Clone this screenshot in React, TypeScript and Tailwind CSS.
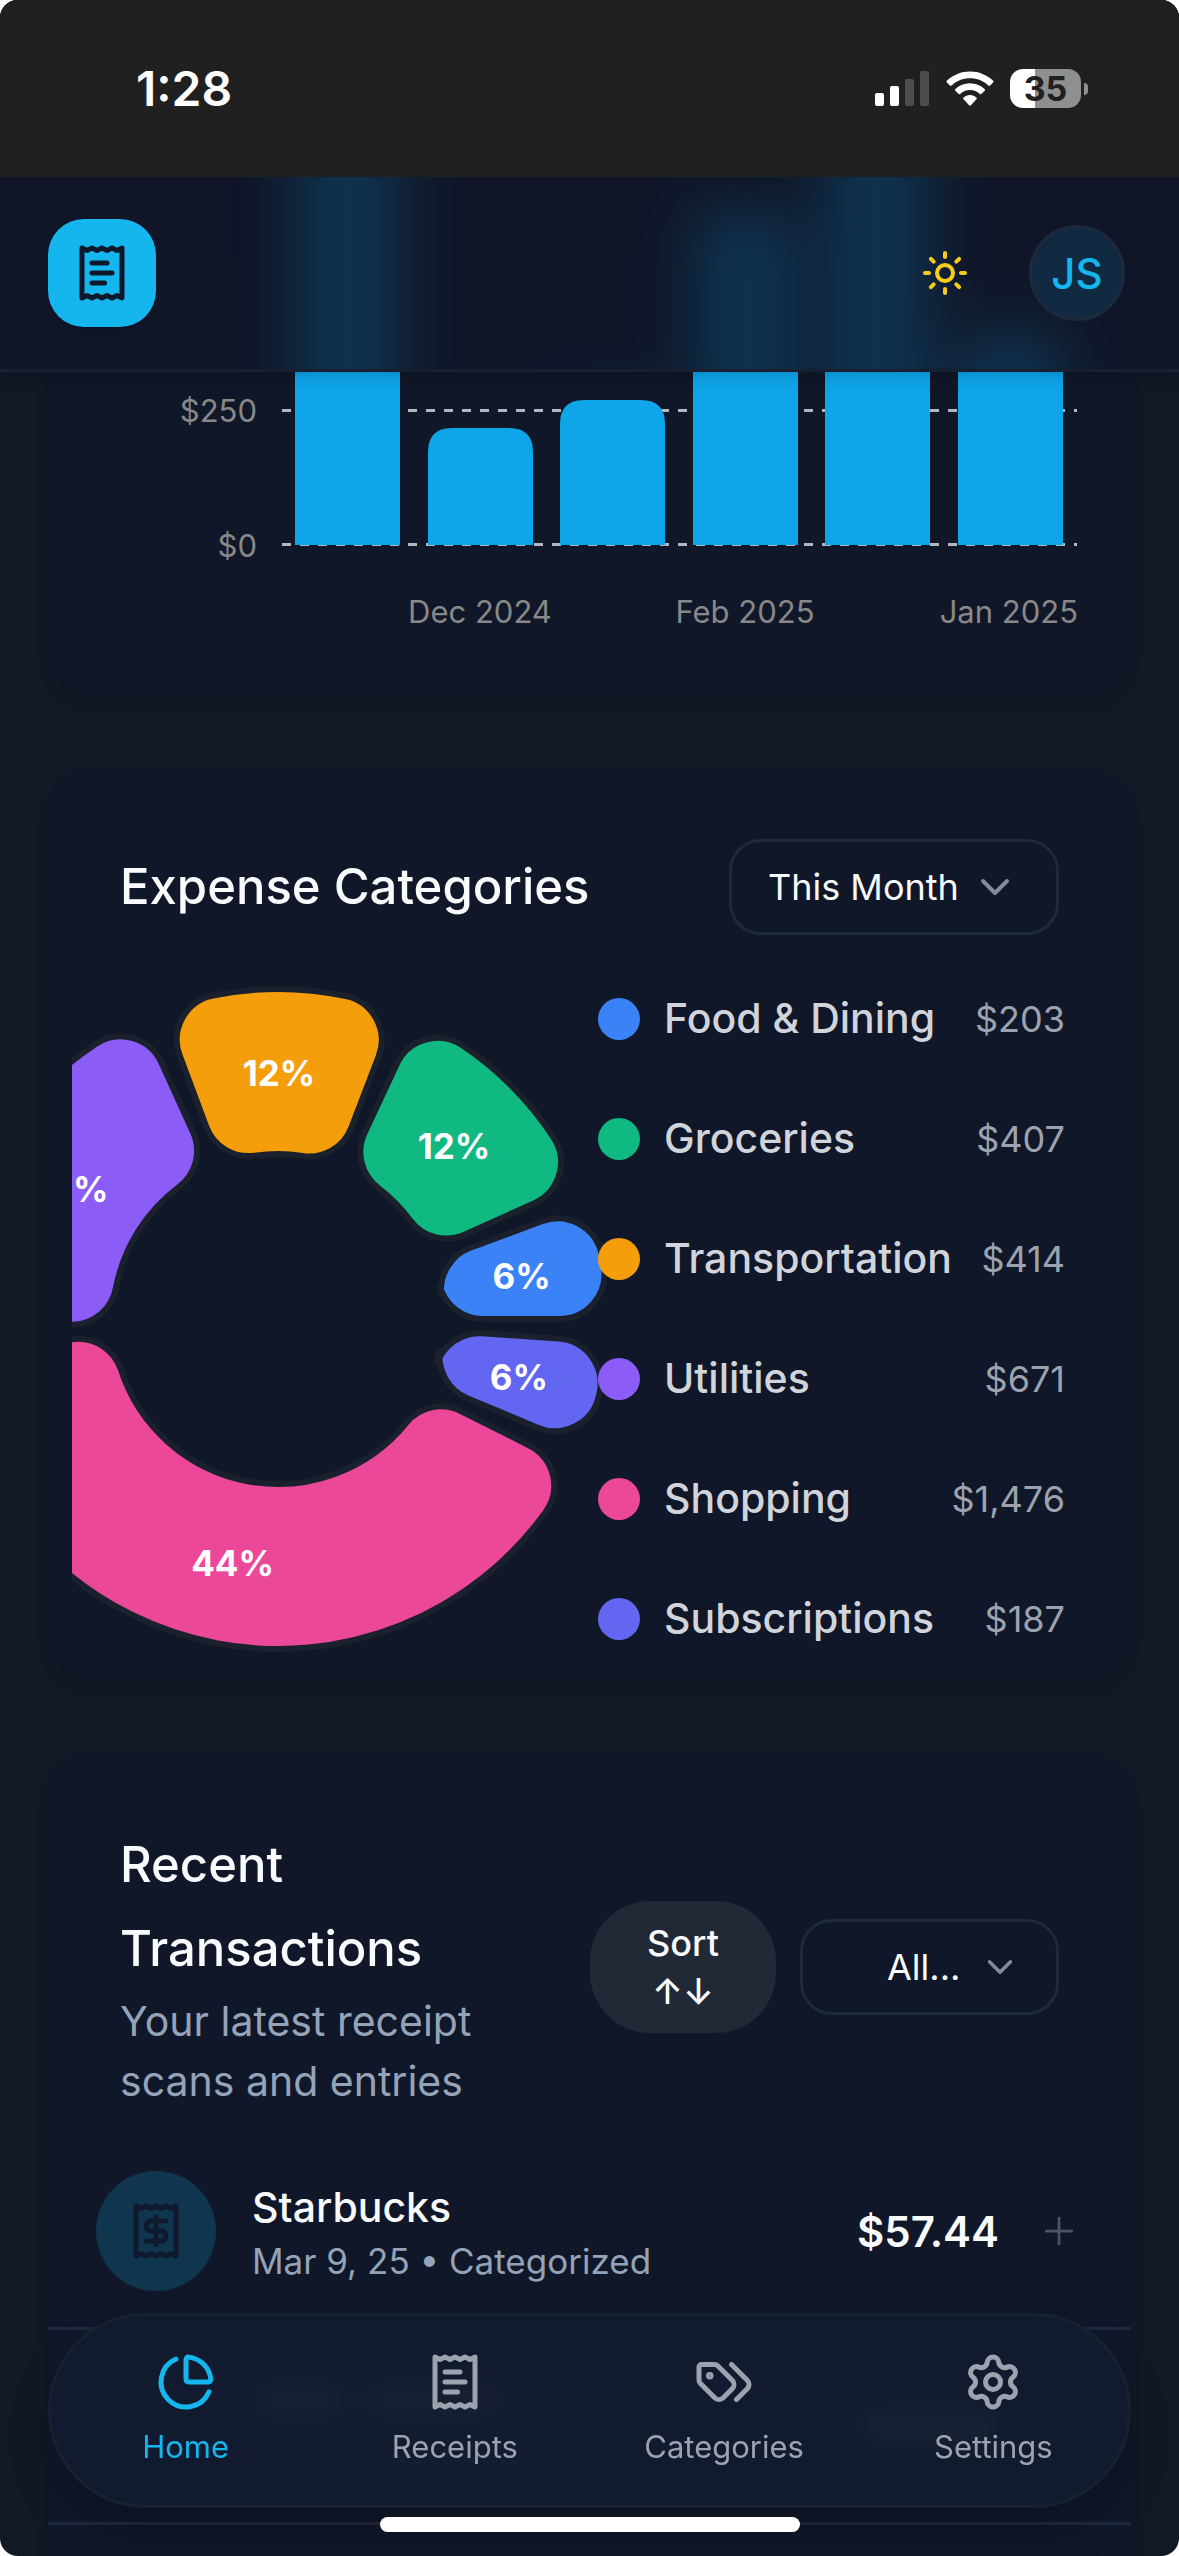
import React from "react";
import { ChartPie, ChevronDown, Plus, Settings, Sun } from "lucide-react";

const RAD = Math.PI / 180;

type Category = { name: string; amount: number; color: string; dot: string };

const categories: Category[] = [
  { name: "Food & Dining", amount: 203, color: "#3b82f6", dot: "bg-[#3b82f6]" },
  { name: "Groceries", amount: 407, color: "#10b981", dot: "bg-[#10b981]" },
  { name: "Transportation", amount: 414, color: "#f59e0b", dot: "bg-[#f59e0b]" },
  { name: "Utilities", amount: 671, color: "#8b5cf6", dot: "bg-[#8b5cf6]" },
  { name: "Shopping", amount: 1476, color: "#ec4899", dot: "bg-[#ec4899]" },
  { name: "Subscriptions", amount: 187, color: "#6366f1", dot: "bg-[#6366f1]" },
];

const PIE = { cx: 206, cy: 336, inner: 165, outer: 330, corner: 45, padding: 4 };

function polar(radius: number, angle: number) {
  const x = PIE.cx + Math.cos(-angle * RAD) * radius;
  const y = PIE.cy + Math.sin(-angle * RAD) * radius;
  return `${x},${y}`;
}

/** Points where a rounded corner touches the ring and the slice's straight side. */
function cornerPoints(radius: number, angle: number, sign: number, external: boolean) {
  const centerRadius = PIE.corner * (external ? 1 : -1) + radius;
  const theta = Math.asin(PIE.corner / centerRadius) / RAD;
  return {
    circle: polar(radius, angle + sign * theta),
    line: polar(centerRadius * Math.cos(theta * RAD), angle),
    theta,
  };
}

function slicePath(start: number, end: number) {
  const c = PIE.corner;
  const os = cornerPoints(PIE.outer, start, 1, false);
  const oe = cornerPoints(PIE.outer, end, -1, false);
  const is = cornerPoints(PIE.inner, start, 1, true);
  const ie = cornerPoints(PIE.inner, end, -1, true);
  const outerLarge = end - start - 2 * os.theta > 180 ? 1 : 0;
  const innerLarge = end - start - 2 * is.theta > 180 ? 1 : 0;
  return [
    `M${os.line}`,
    `A${c},${c},0,0,0,${os.circle}`,
    `A${PIE.outer},${PIE.outer},0,${outerLarge},0,${oe.circle}`,
    `A${c},${c},0,0,0,${oe.line}`,
    `L${ie.line}`,
    `A${c},${c},0,0,0,${ie.circle}`,
    `A${PIE.inner},${PIE.inner},0,${innerLarge},1,${is.circle}`,
    `A${c},${c},0,0,0,${is.line}Z`,
  ].join("");
}

function CategoryPie() {
  const total = categories.reduce((sum, c) => sum + c.amount, 0);
  const sweep = 360 - categories.length * PIE.padding;
  let angle = 0;
  const slices = categories.map((c) => {
    const start = angle;
    const end = start + (c.amount / total) * sweep;
    angle = end + PIE.padding;
    const mid = (start + end) / 2;
    const r = (PIE.inner + PIE.outer) / 2;
    return {
      ...c,
      d: slicePath(start, end),
      x: PIE.cx + Math.cos(mid * RAD) * r,
      y: PIE.cy - Math.sin(mid * RAD) * r,
      percent: `${Math.round((c.amount / total) * 100)}%`,
    };
  });
  return (
    <svg viewBox="0 0 540 672" className="-mr-3.5 w-[540px] shrink-0" role="img" aria-label="Expenses by category">
      {slices.map((s) => (
        <path key={s.name} d={s.d} fill={s.color} stroke="#1b212c" strokeWidth={6} />
      ))}
      {slices.map((s) => (
        <text key={s.name} x={s.x} y={s.y + 14} textAnchor="middle" fill="#fff" className="text-[35px] font-bold">
          {s.percent}
        </text>
      ))}
    </svg>
  );
}

const bars = [
  { x: 247, top: -177 },
  { x: 380, top: 251 },
  { x: 512, top: 223 },
  { x: 645, top: 34 },
  { x: 777, top: -120 },
  { x: 910, top: 155 },
];

function Bars() {
  return (
    <>
      {bars.map((b) => (
        <path key={b.x} d={`M${b.x},368V${b.top + 24}q0,-24,24,-24h57q24,0,24,24V368Z`} fill="#0ea5e9" />
      ))}
    </>
  );
}

function SpendingChart() {
  return (
    <svg viewBox="0 -177 1083 695" className="block h-auto w-full" role="img" aria-label="Monthly spending">
      {[233, 367].map((y) => (
        <line key={y} x1={234} x2={1029} y1={y + 0.5} y2={y + 0.5} stroke="#b4b7bc" strokeWidth={3} strokeDasharray="9 9" />
      ))}
      <Bars />
      <g fill="#888888" className="text-[31px]">
        <text x={209} y={245} textAnchor="end">$250</text>
        <text x={209} y={380} textAnchor="end">$0</text>
        <text x={432} y={446} textAnchor="middle">Dec 2024</text>
        <text x={697} y={446} textAnchor="middle">Feb 2025</text>
        <text x={1030} y={446} textAnchor="end">Jan 2025</text>
      </g>
    </svg>
  );
}

function OutlineIcon({ className, children }: { className?: string; children: React.ReactNode }) {
  return (
    <svg
      viewBox="0 0 24 24"
      fill="none"
      stroke="currentColor"
      strokeWidth={2}
      strokeLinecap="round"
      strokeLinejoin="round"
      className={className}
      aria-hidden="true"
    >
      {children}
    </svg>
  );
}

const receiptEdge = "M4 2v20l2-1 2 1 2-1 2 1 2-1 2 1 2-1 2 1V2l-2 1-2-1-2 1-2-1-2 1-2-1-2 1Z";

function ReceiptTextIcon({ className }: { className?: string }) {
  return (
    <OutlineIcon className={className}>
      <path d={receiptEdge} />
      <path d="M14 8H8" />
      <path d="M16 12H8" />
      <path d="M13 16H8" />
    </OutlineIcon>
  );
}

function ReceiptDollarIcon({ className }: { className?: string }) {
  return (
    <OutlineIcon className={className}>
      <path d={receiptEdge} />
      <path d="M16 8h-6a2 2 0 1 0 0 4h4a2 2 0 1 1 0 4H8" />
      <path d="M12 17.5v-11" />
    </OutlineIcon>
  );
}

function TagsIcon({ className }: { className?: string }) {
  return (
    <OutlineIcon className={className}>
      <path d="m15 5 6.3 6.3a2.4 2.4 0 0 1 0 3.4L17 19" />
      <path d="M9.586 5.586A2 2 0 0 0 8.172 5H3a1 1 0 0 0-1 1v5.172a2 2 0 0 0 .586 1.414L8.29 18.29a2.426 2.426 0 0 0 3.42 0l3.58-3.58a2.426 2.426 0 0 0 0-3.42z" />
      <circle cx="6.3" cy="9.5" r=".5" fill="currentColor" />
    </OutlineIcon>
  );
}

function StatusBar() {
  return (
    <div className="relative flex h-[177px] items-center justify-between bg-[#202020] pr-[91px] pl-[136px] text-white">
      <span className="text-[48px] leading-none font-semibold">1:28</span>
      <div className="flex items-center">
        <svg viewBox="0 0 54 36" className="mr-[17px] h-9 w-[54px]" aria-label="Signal">
          <rect x="0" y="22" width="9" height="13" rx="2" fill="#fff" />
          <rect x="15" y="15" width="9" height="20" rx="2" fill="#fff" />
          <rect x="30" y="8" width="9" height="27" rx="2" fill="#4d4d4d" />
          <rect x="45" y="0" width="9" height="35" rx="2" fill="#4d4d4d" />
        </svg>
        <svg viewBox="0 0 48 36" className="mr-4 h-9 w-12" aria-label="Wi-Fi">
          <g fill="#fff">
            <path d="M24 0.500c8.800 0 16.900 3.400 23 9 .6.600.6 1.300.1 1.900l-3 3c-.5.500-1.200.500-1.800 0C37.400 9.900 31 7.300 24 7.300S10.600 9.900 5.700 14.400c-.6.500-1.300.500-1.800 0l-3-3C.4 10.800.4 10.100 1 9.500c6.100-5.600 14.200-9 23-9Z" />
            <path d="M24 12.300c5.600 0 10.700 2.100 14.600 5.600.6.500.6 1.300 0 1.900l-3 3c-.5.500-1.200.500-1.800.1C31.200 20.500 27.800 19 24 19s-7.200 1.500-9.800 3.900c-.6.400-1.300.4-1.800-.1l-3-3c-.6-.6-.6-1.400 0-1.900 3.900-3.500 9-5.600 14.600-5.600Z" />
            <path d="M24 24c2.500 0 4.700.9 6.400 2.400.6.500.6 1.300 0 1.900l-5.500 5.900c-.5.600-1.300.6-1.800 0l-5.500-5.900c-.6-.6-.6-1.400 0-1.900C19.300 24.900 21.500 24 24 24Z" />
          </g>
        </svg>
        <div className="flex h-[39px] w-[71px] items-center justify-center rounded-[13px] bg-linear-to-r from-white from-35% to-[#8f8f8f] to-35% text-[34px] leading-none font-bold text-[#202020]">
          35
        </div>
        <div className="ml-[3px] h-3 w-1 rounded-r-full bg-[#8f8f8f]" />
      </div>
    </div>
  );
}

function Header() {
  return (
    <header className="absolute inset-x-0 top-0 z-10 border-b-[3px] border-[#171f31] bg-[#101628] shadow-lg">
      {/* Frosted view of the chart bars that scroll beneath the bar. */}
      <div className="absolute inset-0 overflow-hidden px-12" aria-hidden="true">
        <svg viewBox="0 -177 1083 695" className="block h-auto w-full overflow-visible opacity-20 blur-[30px]">
          <Bars />
        </svg>
      </div>
      <StatusBar />
      <div className="relative flex h-48 items-center justify-between pr-[54px] pl-12">
        <a
          href="#home"
          aria-label="Home"
          className="flex size-[108px] items-center justify-center rounded-[36px] bg-[#15b5ee] text-[#0f172a] shadow-sm"
        >
          <ReceiptTextIcon className="size-[60px]" />
        </a>
        <div className="flex items-center gap-[60px]">
          <button type="button" aria-label="Toggle theme" className="text-[#facc15]">
            <Sun className="size-12" />
          </button>
          <button
            type="button"
            className="flex size-24 items-center justify-center rounded-full border-[3px] border-[#1e293b] bg-[#0f2a41] text-[42px] font-medium text-[#15b5ee]"
          >
            JS
          </button>
        </div>
      </div>
    </header>
  );
}

function Select({
  label,
  option,
  className,
  chevron,
}: {
  label: string;
  option: string;
  className: string;
  chevron: string;
}) {
  return (
    <div className="relative flex shrink-0 items-center">
      <select
        aria-label={label}
        className={`block h-24 appearance-none rounded-[32px] border-[3px] border-[#1e2939] bg-transparent text-[36px] text-[#f8fafc] ${className}`}
      >
        <option>{option}</option>
      </select>
      <ChevronDown className={`pointer-events-none absolute text-[#858a95] ${chevron}`} />
    </div>
  );
}

function Nav() {
  const items = [
    { label: "Home", icon: <ChartPie className="size-[60px]" />, active: true },
    { label: "Receipts", icon: <ReceiptTextIcon className="size-[60px]" />, active: false },
    { label: "Categories", icon: <TagsIcon className="size-[60px]" />, active: false },
    { label: "Settings", icon: <Settings className="size-[60px]" />, active: false },
  ];
  return (
    <nav className="absolute inset-x-12 bottom-12 z-10 grid h-[195px] grid-cols-4 rounded-full border-[3px] border-[#18212f] bg-[#121a2e]/95 shadow-2xl backdrop-blur-md">
      {items.map((item) => (
        <a
          key={item.label}
          href={`#${item.label.toLowerCase()}`}
          className={`flex flex-col items-center justify-center gap-3.5 pb-0.5 text-[31px] leading-[42px] ${
            item.active ? "text-[#15b5ee]" : "text-[#9ca3af]"
          }`}
        >
          {item.icon}
          {item.label}
        </a>
      ))}
    </nav>
  );
}

export default function App() {
  return (
    <div className="bg-white font-['Inter',sans-serif]">
      <div className="relative h-screen overflow-hidden rounded-[18px] bg-[#121926] text-[#f8fafc]">
        <Header />
        <main className="flex flex-col gap-[72px] px-12">
          <section className="rounded-b-[48px] bg-[#101728] shadow-lg">
            <SpendingChart />
          </section>

          <section className="rounded-[48px] bg-[#101728] pb-6 shadow-lg">
            <div className="flex items-center justify-between px-[72px] pt-[72px]">
              <h2 className="text-[49px] leading-[84px] font-medium">Expense Categories</h2>
              <Select label="Period" option="This Month" className="w-[330px] pl-9" chevron="right-10 size-12" />
            </div>
            <div className="mt-12 flex items-center pr-[66px] pl-6">
              <CategoryPie />
              <ul className="relative flex min-w-0 flex-1 flex-col gap-[60px]">
                {categories.map((c) => (
                  <li key={c.name} className="flex h-[60px] items-center whitespace-nowrap">
                    <span className={`mr-6 size-[42px] shrink-0 rounded-full ${c.dot}`} />
                    <span className="text-[41px] font-medium text-[#d1d5db]">{c.name}</span>
                    <span className="ml-auto text-[36px] text-[#9ca3af]">${c.amount.toLocaleString("en-US")}</span>
                  </li>
                ))}
              </ul>
            </div>
          </section>

          <section className="rounded-t-[48px] bg-[#101728] shadow-lg">
            <div className="flex items-center justify-between gap-6 px-[72px] pt-[72px]">
              <div className="w-[400px]">
                <h2 className="text-[49px] leading-[84px] font-medium">Recent Transactions</h2>
                <p className="text-[41px] leading-[60px] text-[#94a3b8]">Your latest receipt scans and entries</p>
              </div>
              <div className="flex items-center gap-6">
                <button
                  type="button"
                  className="flex h-[132px] w-[186px] flex-col items-center justify-center rounded-[60px] bg-[#212937] text-[36px] leading-[48px] font-medium"
                >
                  <span>Sort</span>
                  <span>↑↓</span>
                </button>
                <Select
                  label="Category filter"
                  option="All..."
                  className="w-[259px] pl-[84px]"
                  chevron="right-[38px] size-[42px]"
                />
              </div>
            </div>
            <ul className="mt-6">
              <li className="flex items-center border-b-[3px] border-[#1e293b] px-12 py-9">
                <span className="mr-9 flex size-[120px] shrink-0 items-center justify-center rounded-full bg-[#10354f] text-[#101a2e]">
                  <ReceiptDollarIcon className="size-[60px]" />
                </span>
                <span className="flex flex-col">
                  <span className="text-[41px] leading-[60px] font-medium">Starbucks</span>
                  <span className="text-[35px] leading-[48px] text-[#94a3b8]">Mar 9, 25 • Categorized</span>
                </span>
                <span className="mr-9 ml-auto text-[42px] font-semibold">$57.44</span>
                <button type="button" aria-label="Show details" className="flex size-12 items-center justify-center text-[#4b5563]">
                  <Plus className="size-11" strokeWidth={1.5} />
                </button>
              </li>
              <li aria-hidden="true" className="flex items-center border-b-[3px] border-[#1e293b] px-12 py-9">
                <span className="mr-9 size-[120px] shrink-0 rounded-full bg-[#10354f]" />
                <span className="flex flex-col gap-7">
                  <span className="flex gap-3">
                    <span className="h-8 w-24 rounded bg-white/50" />
                    <span className="h-8 w-36 rounded bg-white/50" />
                  </span>
                  <span className="h-6 w-96 rounded bg-[#94a3b8]/40" />
                </span>
                <span className="mr-[84px] ml-auto h-8 w-34 rounded bg-white/60" />
              </li>
              <li aria-hidden="true" className="h-[195px]" />
            </ul>
          </section>
        </main>
        <Nav />
        <div className="absolute bottom-6 left-1/2 z-20 h-[15px] w-[420px] -translate-x-1/2 rounded-full bg-white" />
      </div>
    </div>
  );
}
